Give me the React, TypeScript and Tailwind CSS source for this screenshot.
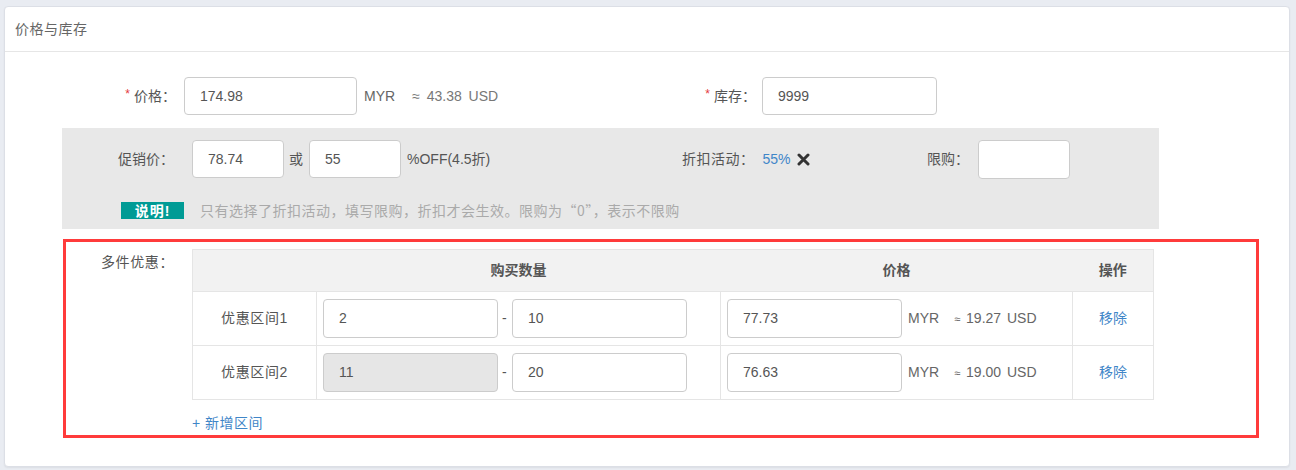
import React from "react";

const font = { fontFamily: '"Liberation Sans", "Noto Sans CJK SC", sans-serif' };

function Input({ value, w, h = 38, disabled = false }: { value: string; w: number; h?: number; disabled?: boolean }) {
  return (
    <div
      className={`flex items-center rounded-[4px] border border-[#cccccc] pl-[15px] text-[14px] text-[#555555] ${disabled ? "bg-[#e6e6e6]" : "bg-white"}`}
      style={{ width: w, height: h }}
    >
      {value}
    </div>
  );
}

function Req({ children }: { children: React.ReactNode }) {
  return (
    <span className="text-[14px] text-[#555555]">
      <span className="relative top-[-3px] mr-[4px] text-[12px] text-[#e4393c]">*</span>
      {children}
    </span>
  );
}

function XIcon() {
  return (
    <svg width="13" height="13" viewBox="0 0 13 13">
      <path d="M2 2 L11 11 M11 2 L2 11" stroke="#333333" strokeWidth="3" strokeLinecap="round" />
    </svg>
  );
}

function TierRow({ label, from, to, price, usd, fromDisabled }: { label: string; from: string; to: string; price: string; usd: string; fromDisabled?: boolean }) {
  return (
    <tr className="h-[54px]">
      <td className="border border-[#e5e5e5] text-center text-[14px] tracking-[0.6px] text-[#555555]">{label}</td>
      <td className="border border-[#e5e5e5] pl-[6px]">
        <div className="flex items-center">
          <Input value={from} w={175} h={39} disabled={fromDisabled} />
          <span className="mx-[4px] w-[6px] text-[14px] text-[#555555]">-</span>
          <Input value={to} w={175} h={39} />
        </div>
      </td>
      <td className="border border-[#e5e5e5] pl-[6px]">
        <div className="flex items-center">
          <Input value={price} w={175} h={39} />
          <span className="ml-[6px] text-[14px] text-[#666666]">MYR</span>
          <span className="ml-[15px] text-[14px] text-[#666666] [word-spacing:2px]">
            <span className="text-[11px]">≈</span> {usd} USD
          </span>
        </div>
      </td>
      <td className="border border-[#e5e5e5] text-center text-[14px] text-[#3f86c8]">移除</td>
    </tr>
  );
}

export default function App() {
  return (
    <div className="h-[470px] w-[1296px] bg-[#e9ecf2] pt-[6px]" style={font}>
      <div className="ml-[4px] h-[461px] w-[1286px] rounded-[4px] border border-[#dcdfe6] bg-white shadow-[0_1px_2px_rgba(0,0,0,0.06)]">
        <div className="flex h-[45px] items-center border-b border-[#e6e6e6] pl-[10px] text-[14px] tracking-[0.5px] text-[#666666]">
          价格与库存
        </div>

        {/* Row 1 */}
        <div className="mt-[25px] flex h-[38px] items-center">
          <div className="flex w-[600px] items-center">
            <div className="w-[171px] text-right">
              <Req>价格：</Req>
            </div>
            <div className="ml-[8px]">
              <Input value="174.98" w={173} />
            </div>
            <span className="ml-[7px] text-[14px] text-[#666666]">MYR</span>
            <span className="ml-[17px] text-[14px] text-[#777777] [word-spacing:3px]">≈ 43.38 USD</span>
          </div>
          <div className="w-[151px] text-right">
            <Req>库存：</Req>
          </div>
          <div className="ml-[6px]">
            <Input value="9999" w={175} />
          </div>
        </div>

        {/* Gray promo box */}
        <div className="ml-[57px] mt-[13px] h-[101px] w-[1097px] bg-[#e8e8e8] pt-[12px]">
          <div className="flex h-[38px] items-center">
            <div className="flex w-[620px] items-center">
              <div className="w-[112px] text-right text-[14px] text-[#555555]">促销价：</div>
              <div className="ml-[18px]">
                <Input value="78.74" w={92} />
              </div>
              <span className="ml-[5px] mr-[6px] text-[14px] text-[#555555]">或</span>
              <Input value="55" w={92} />
              <span className="ml-[6px] text-[14px] text-[#555555]">%OFF(4.5折)</span>
            </div>
            <div className="flex w-[245px] items-center">
              <span className="text-[14px] tracking-[0.5px] text-[#555555]">折扣活动：</span>
              <span className="ml-[8px] text-[14px] text-[#3f86c8]">55%</span>
              <span className="ml-[6px] flex items-center">
                <XIcon />
              </span>
            </div>
            <span className="text-[14px] text-[#555555]">限购：</span>
            <div className="ml-[9px]">
              <Input value="" w={92} h={39} />
            </div>
          </div>
          <div className="mt-[22px] flex items-center">
            <div className="ml-[59px] flex h-[17px] w-[63px] items-center justify-center bg-[#009b95] text-[14px] font-bold leading-none tracking-[1px] text-white">
              说明!
            </div>
            <span
              className="ml-[16px] text-[14px] tracking-[0.5px] text-[#aaaaaa]"
              style={{ fontFamily: '"Noto Sans CJK SC", "Liberation Sans", sans-serif' }}
            >
              只有选择了折扣活动，填写限购，折扣才会生效。限购为“0”，表示不限购
            </span>
          </div>
        </div>

        {/* Red highlighted multi-buy */}
        <div className="ml-[58px] mt-[10px] h-[199px] w-[1196px] border-[3px] border-[#ff3b3b] pt-[7px]">
          <div className="flex">
            <div className="w-[108px] pt-[3px] text-right text-[14px] leading-[20px] tracking-[0.6px] text-[#555555]">多件优惠：</div>
            <div className="ml-[18px]">
              <table className="w-[961px] table-fixed border-collapse">
                <colgroup>
                  <col className="w-[124px]" />
                  <col className="w-[404px]" />
                  <col className="w-[352px]" />
                  <col className="w-[81px]" />
                </colgroup>
                <thead>
                  <tr className="h-[42px] border border-[#e5e5e5] bg-[#f2f2f2] text-[14px] font-bold text-[#555555]">
                    <th></th>
                    <th className="text-center">购买数量</th>
                    <th className="text-center">价格</th>
                    <th className="text-center">操作</th>
                  </tr>
                </thead>
                <tbody>
                  <TierRow label="优惠区间1" from="2" to="10" price="77.73" usd="19.27" />
                  <TierRow label="优惠区间2" from="11" to="20" price="76.63" usd="19.00" fromDisabled />
                </tbody>
              </table>
              <div className="mt-[13px] text-[14px] leading-[20px] tracking-[0.5px] text-[#3f86c8]">+ 新增区间</div>
            </div>
          </div>
        </div>
      </div>
    </div>
  );
}
